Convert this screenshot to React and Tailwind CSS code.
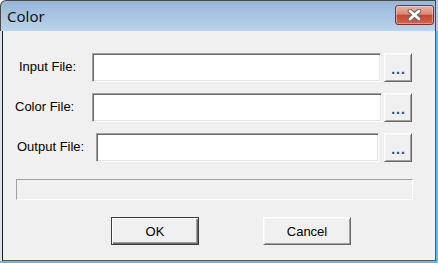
import React from "react";

const font = "font-['Liberation_Sans',Arial,sans-serif]";

function Field({ label, labelPad, labelW, inputW, gap }) {
  return (
    <div className="flex h-[29px] items-center">
      <div className={`shrink-0 ${labelW} ${labelPad}`}>
        <span className="mb-[3px] block text-[13px] leading-[15px] text-black">{label}</span>
      </div>
      <div
        className={`h-[29px] shrink-0 ${inputW} border border-t-[#a0a0a0] border-l-[#a0a0a0] border-b-white border-r-white bg-white shadow-[inset_1px_1px_0_#696969,inset_-1px_-1px_0_#e3e3e3]`}
      />
      <div
        className={`${gap} flex h-[29px] w-[28px] shrink-0 items-center justify-center border border-t-white border-l-white border-b-[#696969] border-r-[#696969] bg-[#f0f0f0] shadow-[inset_1px_1px_0_#f7f7f7,inset_-1px_-1px_0_#a0a0a0]`}
      >
        <span className="pl-[1px] pt-[3px] text-[14px] font-bold leading-[13px] tracking-[1px] text-[#0b4f96]">...</span>
      </div>
    </div>
  );
}

export default function App() {
  return (
    <div className={`flex h-[263px] w-[438px] flex-col bg-[#4ec3ef] ${font}`}>
      {/* title bar row */}
      <div className="flex h-[31px] shrink-0 bg-white">
        <div className="flex h-[31px] w-[436px] items-start justify-between rounded-tl-[6px] border-l border-r border-t border-[#4a4a4a] bg-gradient-to-b from-[#98b6d8] to-[#bcd4ec]">
          <span className="pl-[6px] pt-[5px] font-['Noto_Sans',sans-serif] text-[15px] leading-[20px] text-[#111]">
            Color
          </span>
          <div className="mr-[1px] mt-[4px] flex h-[20px] w-[39px] items-center justify-center rounded-[3px] border border-[#7d3327] bg-[linear-gradient(to_bottom,#eab0a3_0%,#db8a77_45%,#c7472f_52%,#d4644e_100%)] shadow-[inset_0_0_0_1px_rgba(255,255,255,0.35)]">
            <svg width="15" height="12" viewBox="0 0 15 12">
              <path d="M3 2 L12 10 M12 2 L3 10" stroke="#6a5a58" strokeWidth="4.6" strokeLinecap="round" fill="none" />
              <path d="M3 2 L12 10 M12 2 L3 10" stroke="#ffffff" strokeWidth="2.8" strokeLinecap="round" fill="none" />
            </svg>
          </div>
        </div>
        <div className="w-[2px] bg-[#b3cbe5]" />
      </div>

      {/* client */}
      <div className="flex h-[230px] w-[436px] shrink-0 border-l-2 border-l-[#dde4ec]">
        <div className="flex flex-1 flex-col border-b border-l border-r border-b-[#5a5a5a] border-l-[#1e1e1e] border-r-[#5a5a5a] bg-[#f0f0f0]">
          <div className="flex flex-col gap-[11px] pt-[22px]">
            <Field label="Input File:" labelW="w-[89px]" labelPad="pl-[16px]" inputW="w-[289px]" gap="ml-[3px]" />
            <Field label="Color File:" labelW="w-[89px]" labelPad="pl-[12px]" inputW="w-[290px]" gap="ml-[2px]" />
            <Field label="Output File:" labelW="w-[93px]" labelPad="pl-[14px]" inputW="w-[283px]" gap="ml-[5px]" />
          </div>

          <div className="ml-[13px] mt-[17px] h-[21px] w-[397px] border border-t-[#a0a0a0] border-l-[#a0a0a0] border-b-white border-r-white bg-[#f0f0f0]" />

          <div className="mt-[17px] flex pl-[108px]">
            <div className="flex h-[28px] w-[88px] items-center justify-center border border-[#3c3c3c] bg-[#f0f0f0] shadow-[inset_1px_1px_0_#ffffff,inset_-1px_-1px_0_#696969,inset_-2px_-2px_0_#a0a0a0]">
              <span className="text-[13px] leading-[15px] text-black">OK</span>
            </div>
            <div className="ml-[64px] flex h-[28px] w-[88px] items-center justify-center border border-t-white border-l-white border-b-[#696969] border-r-[#696969] bg-[#f0f0f0] shadow-[inset_1px_1px_0_#f7f7f7,inset_-1px_-1px_0_#a0a0a0]">
              <span className="text-[13px] leading-[15px] text-black">Cancel</span>
            </div>
          </div>
        </div>
      </div>
    </div>
  );
}
